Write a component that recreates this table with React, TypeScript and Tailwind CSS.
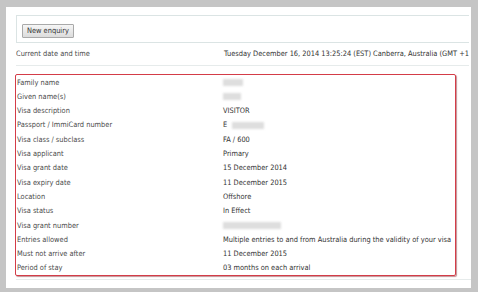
const rows: { label: string; value?: string; mask?: number; prefix?: string }[] = [
  { label: "Family name", mask: 20 },
  { label: "Given name(s)", mask: 18 },
  { label: "Visa description", value: "VISITOR" },
  { label: "Passport / ImmiCard number", prefix: "E", mask: 32 },
  { label: "Visa class / subclass", value: "FA / 600" },
  { label: "Visa applicant", value: "Primary" },
  { label: "Visa grant date", value: "15 December 2014" },
  { label: "Visa expiry date", value: "11 December 2015" },
  { label: "Location", value: "Offshore" },
  { label: "Visa status", value: "In Effect" },
  { label: "Visa grant number", mask: 58 },
  { label: "Entries allowed", value: "Multiple entries to and from Australia during the validity of your visa" },
  { label: "Must not arrive after", value: "11 December 2015" },
  { label: "Period of stay", value: "03 months on each arrival" },
];

// blurred block where personal details are hidden
const Mask = ({ width }: { width: number }) => (
  <span className="inline-block h-[7px] bg-[#dedede] blur-[0.8px] align-middle" style={{ width }} />
);

export default function App() {
  return (
    <div
      className="w-[478px] h-[292px] bg-[#c5c5c5] pt-[7px] pl-[6px] pr-[7px] pb-[4px] overflow-hidden"
      style={{ fontFamily: '"DejaVu Sans Condensed", "DejaVu Sans", Tahoma, sans-serif' }}
    >
      <div className="h-full bg-white pt-[8px] text-[7.4px] text-[#4a4a4a] overflow-hidden">
        <div className="ml-[10px] mr-[2px] h-[28px] border-l border-t border-b border-[#dbe4e4] pl-[5px] pt-[8px]">
          <button className="h-[14px] px-[4px] border border-[#a9a9a9] rounded-[1px] bg-gradient-to-b from-[#f6f6f6] to-[#dcdcdc] text-[#333] leading-none">
            New enquiry
          </button>
        </div>

        <div className="flex items-center h-[23px] ml-[10px] mr-[2px] border-b border-[#e6ebeb] overflow-hidden">
          <div className="w-[208px] shrink-0">Current date and time</div>
          <div className="whitespace-nowrap text-[#333]">
            Tuesday December 16, 2014 13:25:24 (EST) Canberra, Australia (GMT +11:00)
          </div>
        </div>

        <div className="ml-[9px] w-[441px] mt-[8px] border border-[#d43c48] rounded-[2px] shadow-[1px_1px_1px_rgba(120,10,20,0.45)]">
          {rows.map((r) => (
            <div key={r.label} className="flex items-center h-[14.3px]">
              <div className="w-[207px] shrink-0 pl-[1px]">{r.label}</div>
              <div className="whitespace-nowrap text-[#333] flex items-center">
                {r.prefix && <span className="mr-[5px]">{r.prefix}</span>}
                {r.value}
                {r.mask && <Mask width={r.mask} />}
              </div>
            </div>
          ))}
        </div>

        <div className="ml-[10px] mt-[3px] border-b border-[#e6ebeb]" />
      </div>
    </div>
  );
}
